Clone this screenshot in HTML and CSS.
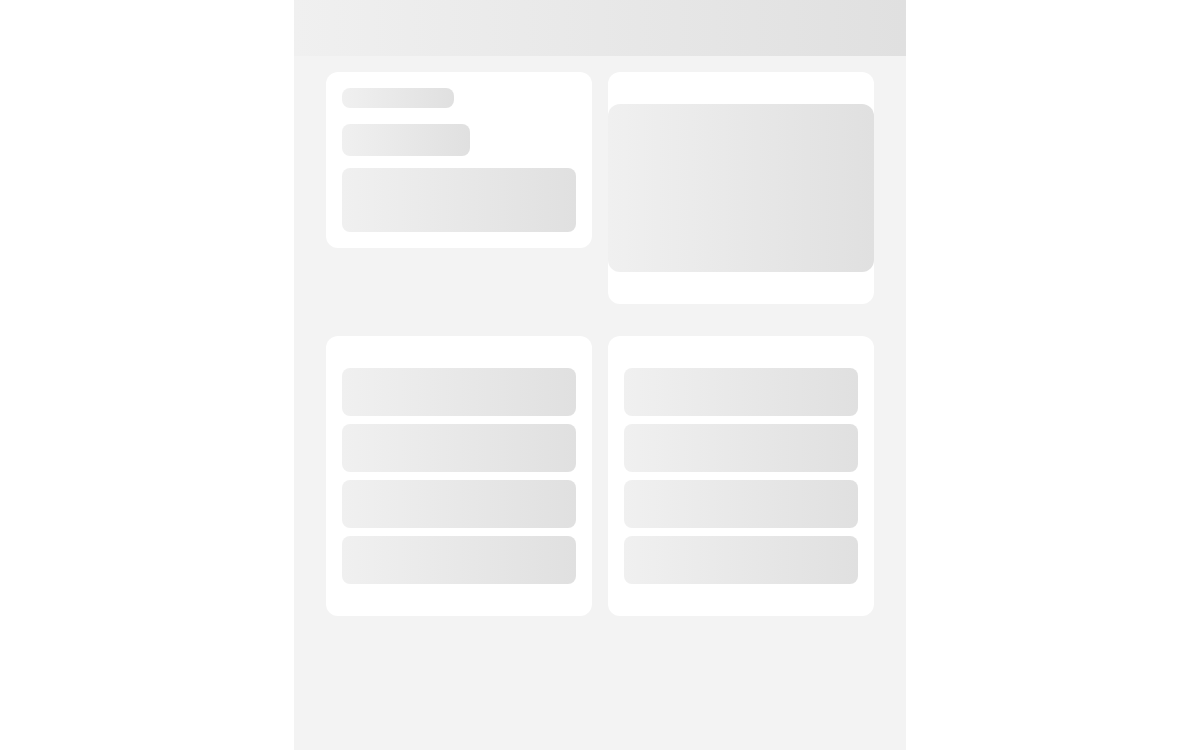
FILE: index.html
```html
<!DOCTYPE html>
<html>
<head>
<meta charset="utf-8">
<link rel="stylesheet" href="styles.css">
</head>
<body>
<div class="app">
  <div class="header sk"></div>
  <div class="content">
    <div class="grid">
      <div class="card card-stats">
        <div class="sk bar-sm"></div>
        <div class="sk bar-md"></div>
        <div class="sk block"></div>
      </div>
      <div class="card card-media">
        <div class="sk media"></div>
      </div>
    </div>
    <div class="grid">
      <div class="card card-list">
        <div class="sk row"></div>
        <div class="sk row"></div>
        <div class="sk row"></div>
        <div class="sk row"></div>
      </div>
      <div class="card card-list">
        <div class="sk row"></div>
        <div class="sk row"></div>
        <div class="sk row"></div>
        <div class="sk row"></div>
      </div>
    </div>
  </div>
</div>
</body>
</html>
```
FILE: styles.css
```css
* { box-sizing: border-box; }
html, body { margin: 0; padding: 0; background: #ffffff; height: 100%; }
body { font-family: "Liberation Sans", Arial, sans-serif; }
.app {
  width: 612px;
  margin: 0 auto;
  min-height: 750px;
  background: #f3f3f3;
}
.sk { background: linear-gradient(90deg, #f0f0f0 0%, #e0e0e0 100%); }
.header { height: 56px; }
.content {
  padding: 16px 32px;
  display: flex;
  flex-direction: column;
  gap: 32px;
}
.grid {
  display: grid;
  grid-template-columns: 1fr 1fr;
  gap: 16px;
  align-items: start;
}
.card {
  background: #ffffff;
  border-radius: 12px;
}
.card-stats {
  padding: 16px;
  display: flex;
  flex-direction: column;
}
.bar-sm { width: 112px; height: 20px; border-radius: 8px; }
.bar-md { width: 128px; height: 32px; border-radius: 8px; margin-top: 16px; }
.block { height: 64px; border-radius: 8px; margin-top: 12px; }
.card-media { padding: 32px 0; }
.media { height: 168px; border-radius: 12px; }
.card-list {
  padding: 32px 16px;
  display: flex;
  flex-direction: column;
  gap: 8px;
}
.row { height: 48px; border-radius: 8px; }
```
